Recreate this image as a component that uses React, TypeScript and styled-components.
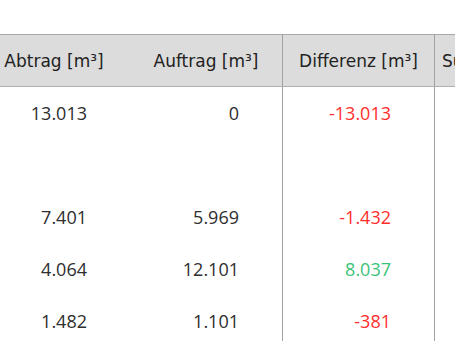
import React from 'react';
import styled, { createGlobalStyle } from 'styled-components';

interface Row {
  abtrag?: string;
  auftrag?: string;
  diff?: string;
}

const rows: Row[] = [
  { abtrag: '13.013', auftrag: '0', diff: '-13.013' },
  {},
  { abtrag: '7.401', auftrag: '5.969', diff: '-1.432' },
  { abtrag: '4.064', auftrag: '12.101', diff: '8.037' },
  { abtrag: '1.482', auftrag: '1.101', diff: '-381' },
];

const GlobalStyle = createGlobalStyle`
  html, body {
    margin: 0;
    padding: 0;
    background: #ffffff;
    overflow: hidden;
  }
`;

const Page = styled.div`
  width: 455px;
  height: 341px;
  overflow: hidden;
  padding-top: 34px;
  box-sizing: border-box;
`;

const Table = styled.div`
  display: grid;
  grid-template-columns: 152px 152px 152px 152px;
  grid-auto-rows: 52px;
  margin-left: -22px;
  width: 608px;
  border-top: 1px solid #a8a8a8;
`;

const HeadCell = styled.div<{ $divider?: boolean }>`
  display: flex;
  align-items: center;
  justify-content: center;
  background: #dcdcdc;
  border-bottom: 1px solid #b0b0b0;
  border-left: ${(p) => (p.$divider ? '1px solid #a0a0a0' : 'none')};
  font-family: 'DejaVu Sans', Verdana, sans-serif;
  font-size: 17px;
  color: #222;
  white-space: nowrap;
  overflow: hidden;
  box-sizing: border-box;
`;

const LastHead = styled(HeadCell)`
  justify-content: flex-start;
  padding-left: 7px;
`;

const Cell = styled.div<{ $divider?: boolean; $tone?: 'neg' | 'pos' }>`
  display: flex;
  align-items: center;
  justify-content: flex-end;
  padding-right: 43px;
  border-left: ${(p) => (p.$divider ? '1px solid #a0a0a0' : 'none')};
  font-family: 'Open Sans', 'Liberation Sans', sans-serif;
  font-size: 18px;
  color: ${(p) => (p.$tone === 'neg' ? '#ff2e2e' : p.$tone === 'pos' ? '#3cc37b' : '#2e2e2e')};
  box-sizing: border-box;
`;

const tone = (v?: string) => (v ? (v.startsWith('-') ? 'neg' : 'pos') : undefined);

export default function App() {
  return (
    <Page>
      <GlobalStyle />
      <Table>
        <HeadCell>Abtrag [m³]</HeadCell>
        <HeadCell>Auftrag [m³]</HeadCell>
        <HeadCell $divider>Differenz [m³]</HeadCell>
        <LastHead $divider>Summe [m³]</LastHead>
        {rows.map((r, i) => (
          <React.Fragment key={i}>
            <Cell>{r.abtrag}</Cell>
            <Cell>{r.auftrag}</Cell>
            <Cell $divider $tone={tone(r.diff)}>
              {r.diff}
            </Cell>
            <Cell $divider />
          </React.Fragment>
        ))}
      </Table>
    </Page>
  );
}
